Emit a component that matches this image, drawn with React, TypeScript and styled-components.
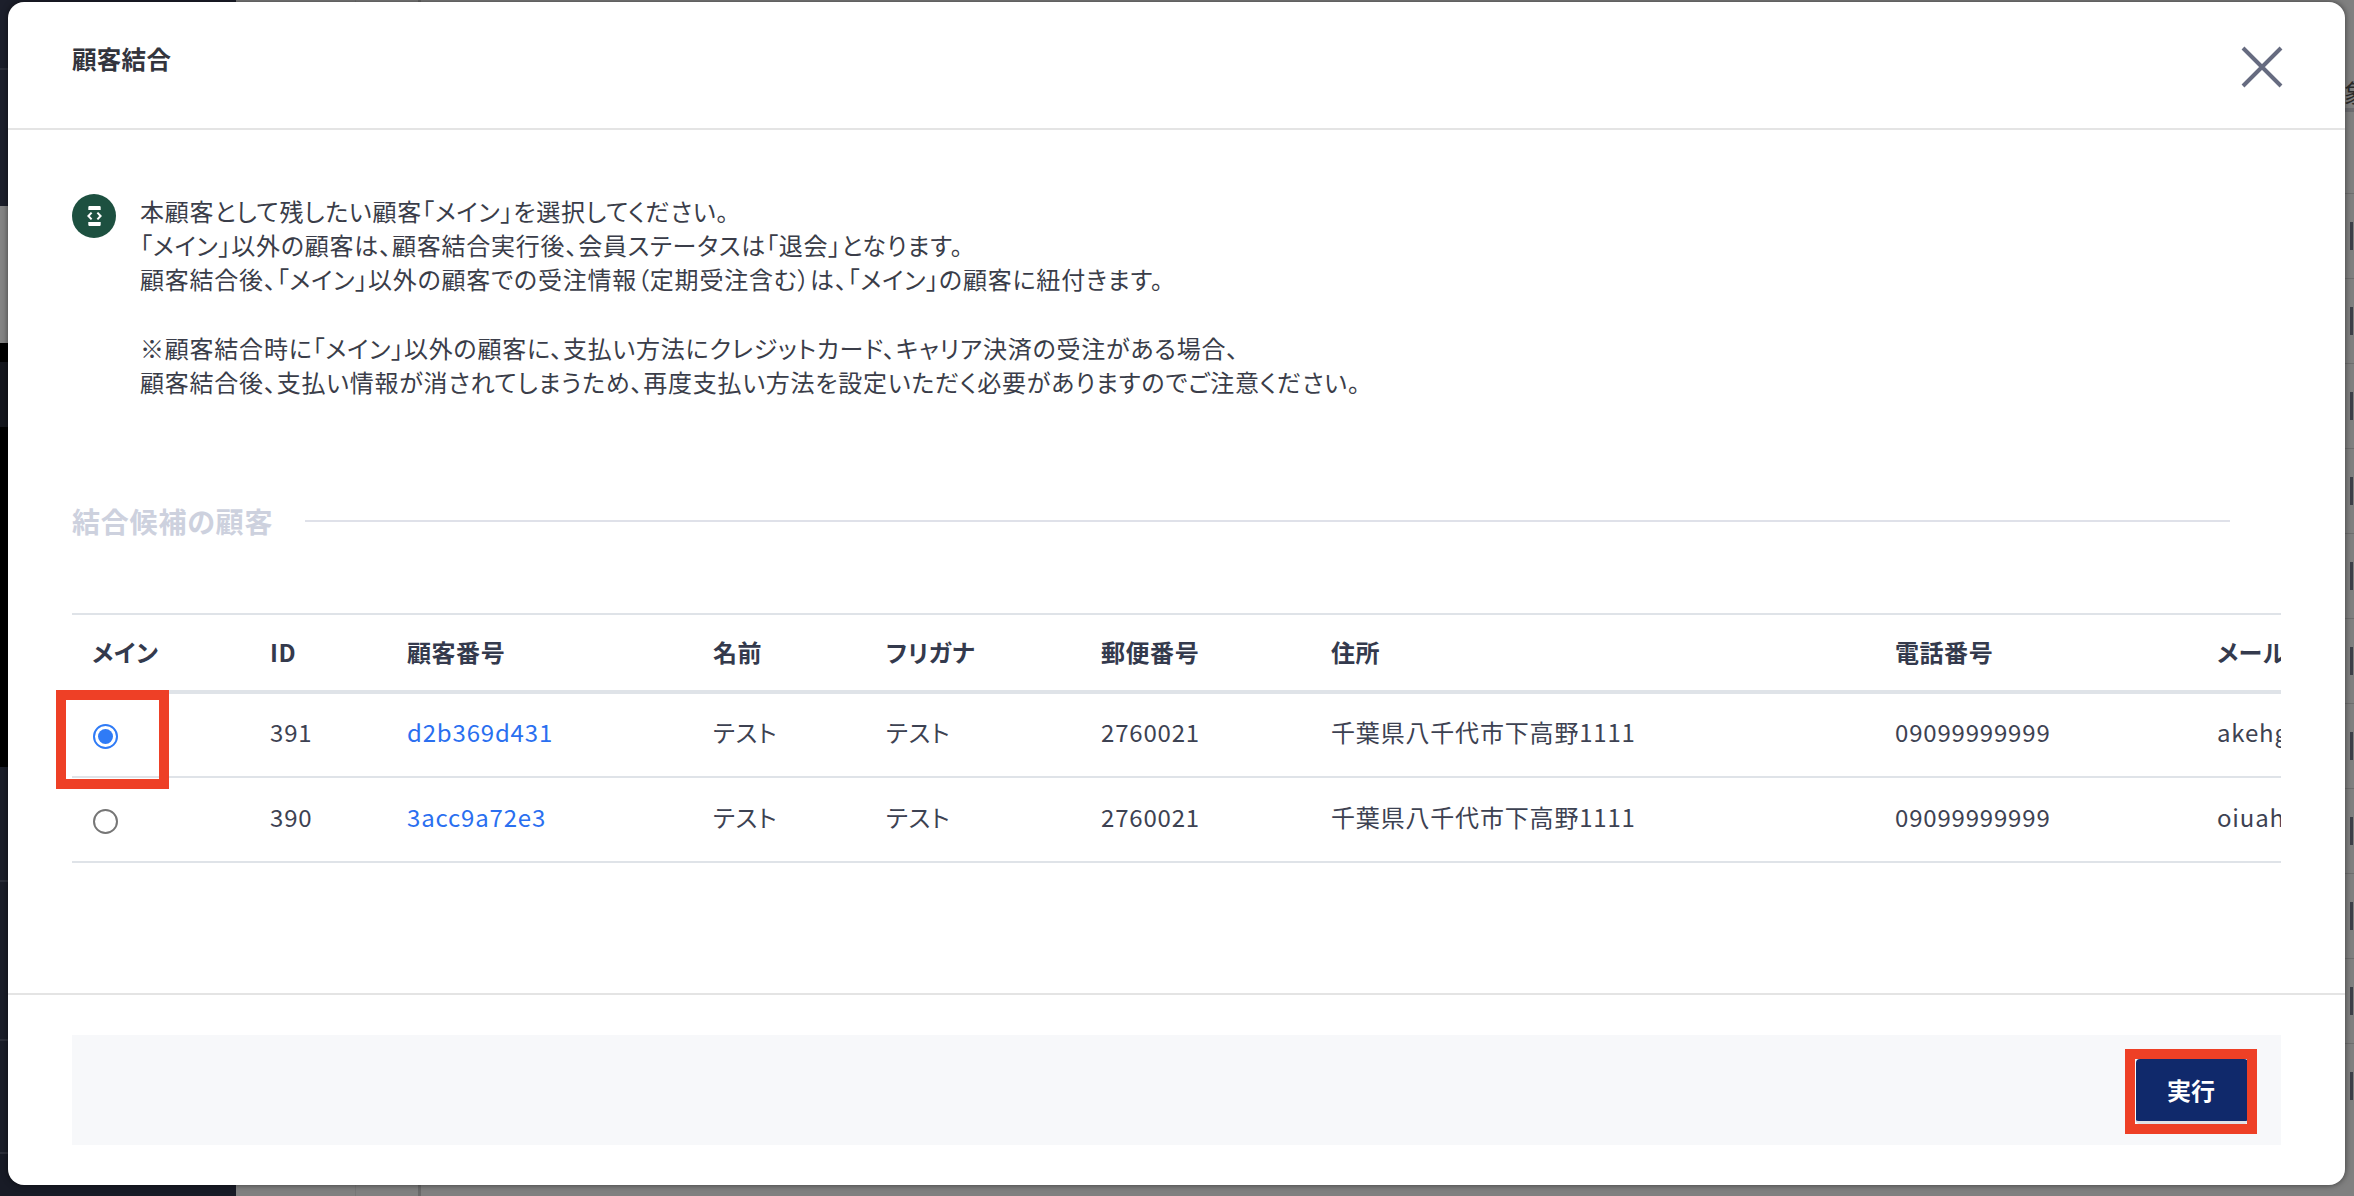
import React from "react";
import styled, { createGlobalStyle } from "styled-components";

const Global = createGlobalStyle`
  html, body { margin: 0; padding: 0; width: 2354px; height: 1196px; overflow: hidden; }
  body { font-family: "Noto Sans CJK JP", "Noto Sans", sans-serif; font-feature-settings: "palt"; }
  * { box-sizing: border-box; }
`;

const Page = styled.div`
  position: relative;
  width: 2354px;
  height: 1196px;
  display: flex;
  overflow: hidden;
`;

const Sidebar = styled.aside`
  width: 236px;
  display: flex;
  flex-direction: column;
  background: #181b26;
`;

const SideBlock = styled.div<{ $h: number; $bg: string; $line?: boolean }>`
  height: ${(p) => p.$h}px;
  background: ${(p) => p.$bg};
  border-bottom: ${(p) => (p.$line ? "2px solid #2c2f3a" : "0")};
  flex: ${(p) => (p.$h === 0 ? 1 : "none")};
`;

const Main = styled.main`
  flex: 1;
  display: flex;
  background: #808080;
`;

const ColA = styled.div`
  width: 120px;
  border-right: 1px solid #777;
`;

const ColB = styled.div`
  width: 65px;
  border-right: 3px solid #6a6a6a;
`;

const ColC = styled.div`
  flex: 1;
  display: flex;
  flex-direction: column;
  padding-top: 108px;
  position: relative;
`;

const StripGlyph = styled.span`
  position: absolute;
  top: 74px;
  right: -14px;
  font-size: 24px;
  color: #2b2b2b;
`;

const StripRow = styled.div<{ $thick?: boolean }>`
  height: 85px;
  flex: none;
  display: flex;
  justify-content: flex-end;
  align-items: center;
  padding-right: 1px;
  border-top: ${(p) => (p.$thick ? "4px solid #6c6c70" : "1px solid #6e6e6e")};
`;

const StripBar = styled.i`
  display: block;
  width: 3px;
  height: 28px;
  background: #3d3f48;
`;

const Modal = styled.div`
  position: absolute;
  left: 8px;
  top: 2px;
  width: 2337px;
  height: 1183px;
  background: #fff;
  border-radius: 16px;
  box-shadow: 0 0 6px rgba(0, 0, 0, 0.55);
  display: flex;
  flex-direction: column;
  overflow: hidden;
`;

const Header = styled.header`
  height: 128px;
  flex: none;
  display: flex;
  justify-content: space-between;
  padding: 39px 63px 0 64px;
  border-bottom: 2px solid #e4e4e4;
`;

const Title = styled.h1`
  margin: 0;
  font-size: 24.5px;
  line-height: 36px;
  font-weight: 700;
  letter-spacing: 0.3px;
  color: #33353d;
`;

const CloseButton = styled.button`
  width: 40px;
  height: 40px;
  margin-top: 6px;
  padding: 0;
  border: 0;
  background: none;
  color: #666b80;
  display: block;
`;

const Body = styled.div`
  flex: 1;
  padding: 64px 64px 0;
  display: flex;
  flex-direction: column;
`;

const Notice = styled.div`
  display: flex;
  gap: 24px;
  align-items: flex-start;
`;

const NoticeIcon = styled.span`
  width: 44px;
  height: 44px;
  flex: none;
  border-radius: 50%;
  background: #1d5040;
  display: flex;
  align-items: center;
  justify-content: center;
`;

const NoticeText = styled.p`
  margin: 0;
  font-size: 24px;
  line-height: 34.2px;
  letter-spacing: 0.78px;
  color: #3a3d49;
  white-space: pre-line;
`;

const Section = styled.div`
  display: flex;
  align-items: center;
  gap: 32px;
  margin-top: 102px;
  padding-right: 51px;
`;

const SectionTitle = styled.h2`
  margin: 0;
  font-size: 28px;
  line-height: 40px;
  font-weight: 700;
  letter-spacing: 0.8px;
  color: #cdd1de;
`;

const SectionRule = styled.i`
  display: block;
  flex: 1;
  height: 2px;
  margin-top: -1px;
  background: #dfe1e9;
`;

const TableWrap = styled.div`
  margin-top: 72px;
  overflow: hidden;
`;

const Table = styled.table`
  table-layout: fixed;
  border-collapse: collapse;
  width: 2500px;
  font-size: 24px;
`;

const HeadCell = styled.th`
  height: 78px;
  padding: 0 0 2px 20px;
  text-align: left;
  font-weight: 700;
  letter-spacing: 0.55px;
  color: #343a4d;
  white-space: nowrap;
  border-top: 2px solid #dfe3e8;
  border-bottom: 4px solid #dfe3e8;
`;

const Cell = styled.td`
  height: 85px;
  padding: 0 0 7px 20px;
  color: #3d4252;
  white-space: nowrap;
  overflow: hidden;
  letter-spacing: 0.82px;
  border-bottom: 2px solid #dfe3e8;
`;

const RadioCell = styled(Cell)`
  padding: 0 0 0 21px;
`;

const Link = styled.a`
  color: #2a6ff0;
  text-decoration: none;
`;

const Radio = styled.input.attrs({ type: "radio" })`
  appearance: none;
  display: block;
  width: 25px;
  height: 25px;
  margin: 3px 0 0;
  padding: 3px;
  border: 2px solid #767676;
  border-radius: 50%;
  background: #fff content-box;
  &:checked {
    border-color: #2f7bf6;
    background: #2f7bf6 content-box;
  }
`;

const Footer = styled.footer`
  height: 192px;
  flex: none;
  padding: 40px 64px;
  border-top: 2px solid #e4e4e4;
`;

const FooterPanel = styled.div`
  height: 110px;
  background: #f7f8fa;
  display: flex;
  align-items: flex-start;
  justify-content: flex-end;
  padding: 24px 33px 0 0;
`;

const RunButton = styled.button`
  width: 112px;
  height: 65px;
  padding: 0 2px 2px 0;
  border: 0;
  border-bottom: 3px solid #dfe1e6;
  border-radius: 4px;
  background: #10296b;
  color: #fff;
  font: 700 24px "Noto Sans CJK JP", sans-serif;
  font-feature-settings: "palt";
`;

const Highlight = styled.div<{ $l: number; $t: number; $w: number; $h: number }>`
  position: absolute;
  left: ${(p) => p.$l}px;
  top: ${(p) => p.$t}px;
  width: ${(p) => p.$w}px;
  height: ${(p) => p.$h}px;
  border: 10px solid #ee4026;
  pointer-events: none;
`;

const columns = [178, 137, 306, 173, 215, 230, 564, 322, 377];
const heads = ["メイン", "ID", "顧客番号", "名前", "フリガナ", "郵便番号", "住所", "電話番号", "メールアドレス"];
const rows = [
  { id: "391", no: "d2b369d431", mail: "akehgfdsa@example.com", checked: true },
  { id: "390", no: "3acc9a72e3", mail: "oiuahgfds@example.com", checked: false },
];

const notice = `本顧客として残したい顧客「メイン」を選択してください。
「メイン」以外の顧客は、顧客結合実行後、会員ステータスは「退会」となります。
顧客結合後、「メイン」以外の顧客での受注情報（定期受注含む）は、「メイン」の顧客に紐付きます。

※顧客結合時に「メイン」以外の顧客に、支払い方法にクレジットカード、キャリア決済の受注がある場合、
顧客結合後、支払い情報が消されてしまうため、再度支払い方法を設定いただく必要がありますのでご注意ください。`;

export default function App() {
  return (
    <Page>
      <Global />
      <Sidebar>
        <SideBlock $h={70} $bg="#1c1f2b" $line />
        <SideBlock $h={136} $bg="#1c1f2b" />
        <SideBlock $h={137} $bg="#858585" />
        <SideBlock $h={19} $bg="#000" />
        <SideBlock $h={65} $bg="#14161d" />
        <SideBlock $h={340} $bg="#000" />
        <SideBlock $h={115} $bg="#1b1e29" $line />
        <SideBlock $h={159} $bg="#1b1e29" $line />
        <SideBlock $h={113} $bg="#1b1e29" $line />
        <SideBlock $h={0} $bg="#181b26" />
      </Sidebar>
      <Main>
        <ColA />
        <ColB />
        <ColC>
          <StripGlyph>象</StripGlyph>
          <StripRow $thick />
          {Array.from({ length: 11 }, (_, i) => (
            <StripRow key={i}>
              <StripBar />
            </StripRow>
          ))}
        </ColC>
      </Main>
      <Modal>
        <Header>
          <Title>顧客結合</Title>
          <CloseButton aria-label="閉じる">
            <svg width="40" height="40" viewBox="0 0 40 40" fill="none" stroke="currentColor" strokeWidth="4" overflow="visible">
              <path d="M1 1 L39 39 M39 1 L1 39" />
            </svg>
          </CloseButton>
        </Header>
        <Body>
          <Notice>
            <NoticeIcon>
              <svg width="15" height="20" viewBox="0 0 15 20" fill="none">
                <path d="M2.5 0h10a1.2 1.2 0 0 1 1.2 1.2V4H1.3V1.2A1.2 1.2 0 0 1 2.5 0zM1.3 16h12.4v2.8a1.2 1.2 0 0 1-1.2 1.2h-10a1.2 1.2 0 0 1-1.2-1.2z" fill="#fff" />
                <path d="M4.6 6.6 1.4 10l3.2 3.4M10.4 6.6l3.2 3.4-3.2 3.4" stroke="#fff" strokeWidth="2" />
              </svg>
            </NoticeIcon>
            <NoticeText>{notice}</NoticeText>
          </Notice>
          <Section>
            <SectionTitle>結合候補の顧客</SectionTitle>
            <SectionRule />
          </Section>
          <TableWrap>
            <Table>
              <colgroup>
                {columns.map((w, i) => (
                  <col key={i} width={w} />
                ))}
              </colgroup>
              <thead>
                <tr>
                  {heads.map((h) => (
                    <HeadCell key={h}>{h}</HeadCell>
                  ))}
                </tr>
              </thead>
              <tbody>
                {rows.map((r) => (
                  <tr key={r.id}>
                    <RadioCell>
                      <Radio name="main" defaultChecked={r.checked} />
                    </RadioCell>
                    <Cell>{r.id}</Cell>
                    <Cell>
                      <Link href="#">{r.no}</Link>
                    </Cell>
                    <Cell>テスト</Cell>
                    <Cell>テスト</Cell>
                    <Cell>2760021</Cell>
                    <Cell>千葉県八千代市下高野1111</Cell>
                    <Cell>09099999999</Cell>
                    <Cell>{r.mail}</Cell>
                  </tr>
                ))}
              </tbody>
            </Table>
          </TableWrap>
        </Body>
        <Footer>
          <FooterPanel>
            <RunButton>実行</RunButton>
          </FooterPanel>
        </Footer>
      </Modal>
      <Highlight $l={56} $t={690} $w={113} $h={99} />
      <Highlight $l={2125} $t={1049} $w={132} $h={85} />
    </Page>
  );
}
